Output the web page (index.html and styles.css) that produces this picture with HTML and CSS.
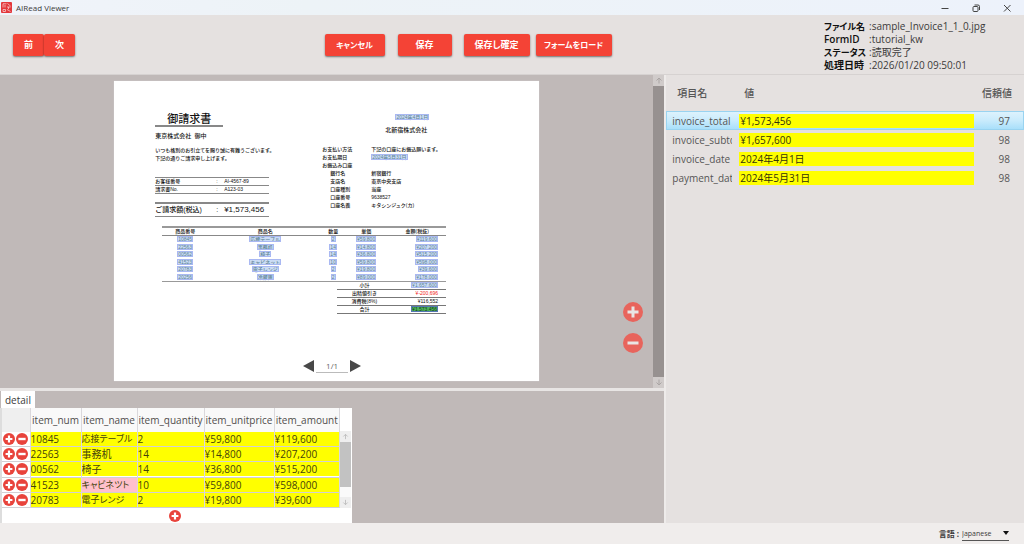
FILE: index.html
```html
<!DOCTYPE html>
<html lang="ja">
<head>
<meta charset="utf-8">
<title>AIRead Viewer</title>
<link rel="stylesheet" href="styles.css">
</head>
<body>
<svg class="defs" aria-hidden="true">
  <symbol id="plus" viewBox="0 0 12 12"><circle cx="6" cy="6" r="6" fill="currentColor"/><path d="M6 2.6v6.8M2.6 6h6.8" stroke="#fff" stroke-width="2.2"/></symbol>
  <symbol id="minus" viewBox="0 0 12 12"><circle cx="6" cy="6" r="6" fill="currentColor"/><path d="M2.4 6h7.2" stroke="#fff" stroke-width="2.4"/></symbol>
  <symbol id="zoom-in" viewBox="0 0 20 20"><circle cx="10" cy="10" r="10" fill="currentColor"/><path d="M10 4.5v11M4.5 10h11" stroke="#e9e5e4" stroke-width="3"/></symbol>
  <symbol id="zoom-out" viewBox="0 0 20 20"><circle cx="10" cy="10" r="10" fill="currentColor"/><path d="M4.5 10h11" stroke="#e9e5e4" stroke-width="3"/></symbol>
  <symbol id="up" viewBox="0 0 8 8"><path d="M4 7V1.5M1.5 4L4 1.5L6.500 4" fill="none" stroke="currentColor"/></symbol>
  <symbol id="down" viewBox="0 0 8 8"><path d="M4 1v5.500M1.500 4L4 6.500L6.500 4" fill="none" stroke="currentColor"/></symbol>
</svg>
<div class="app">
  <header class="titlebar">
    <svg class="logo" viewBox="0 0 11 11"><rect width="11" height="11" rx="1" fill="#e3383c"/><path d="M2 1.800h3.500M2 1.800v3.700M4 3v2.500M2 7.500h2.500v2H2zM6.500 1.500L9.500 4M6 5h3.500M6 7.500L9.500 9.500M7.500 5v2" fill="none" stroke="#fbdcdc" stroke-width=".7"/></svg>
    <h1 class="app-name">AIRead Viewer</h1>
    <div class="window-buttons">
      <button aria-label="最小化"><svg viewBox="0 0 10 10"><path d="M1.500 5.500h7"/></svg></button>
      <button aria-label="元に戻す"><svg viewBox="0 0 10 10"><rect x="2" y="3.500" width="5" height="5" rx="1"/><path d="M3.500 2h3.500q1.500 0 1.500 1.500v3.500"/></svg></button>
      <button aria-label="閉じる"><svg viewBox="0 0 10 10"><path d="M2 2l6.500 6.500M8.500 2L2 8.500"/></svg></button>
    </div>
  </header>

  <div class="toolbar">
    <div class="nav-buttons"><button class="btn">前</button><button class="btn">次</button></div>
    <div class="actions">
      <button class="btn cancel">キャンセル</button>
      <button class="btn save">保存</button>
      <button class="btn commit">保存し確定</button>
      <button class="btn load">フォームをロード</button>
    </div>
    <dl class="info">
      <dt class="kana">ファイル名</dt><dd>:sample_Invoice1_1_0.jpg</dd>
      <dt>FormID</dt><dd>:tutorial_kw</dd>
      <dt class="kana">ステータス</dt><dd>:読取完了</dd>
      <dt>処理日時</dt><dd>:2026/01/20 09:50:01</dd>
    </dl>
  </div>

  <main class="content">
    <div class="left">
      <section class="viewer">
        <div class="canvas">
          <article class="paper">
            <div class="paper-top">
              <div class="bill-to">
                <h2>御請求書</h2>
                <p class="company">東京株式会社&nbsp; 御中</p>
                <p>いつも格別のお引立てを賜り誠に有難うございます。</p>
                <p>下記の通りご請求申し上げます。</p>
                <dl class="refs">
                  <div><dt>お客様番号</dt><dd>:</dd><dd>AI-4567-89</dd></div>
                  <div><dt>請求書No.</dt><dd>:</dd><dd>A123-03</dd></div>
                </dl>
                <dl class="total"><dt>ご請求額(税込)</dt><dd>:</dd><dd class="amount">¥1,573,456</dd></dl>
              </div>
              <div class="pay-to">
                <p class="date"><mark>2024年4月1日</mark></p>
                <p class="issuer">北新宿株式会社</p>
                <dl class="bank">
                  <dt>お支払い方法</dt><dd>下記の口座にお振込願います。</dd>
                  <dt>お支払期日</dt><dd><mark>2024年5月31日</mark></dd>
                  <dt>お振込み口座</dt><dd></dd>
                  <dt class="sub">銀行名</dt><dd>新宿銀行</dd>
                  <dt class="sub">支店名</dt><dd>東京中央支店</dd>
                  <dt class="sub">口座種別</dt><dd>当座</dd>
                  <dt class="sub">口座番号</dt><dd>9638527</dd>
                  <dt class="sub">口座名義</dt><dd>キタシンジュク(カ)</dd>
                </dl>
              </div>
            </div>
            <table class="lines">
              <colgroup><col class="w-num"><col class="w-name"><col class="w-qty"><col class="w-price"><col class="w-sum"></colgroup>
              <thead><tr><th>商品番号</th><th>商品名</th><th>数量</th><th>単価</th><th>金額(税抜)</th></tr></thead>
              <tbody>
                <tr><td><mark>10845</mark></td><td><mark>応接テーブル</mark></td><td><mark>2</mark></td><td><mark>¥59,800</mark></td><td><mark>¥119,600</mark></td></tr>
                <tr><td><mark>22563</mark></td><td><mark>事務机</mark></td><td><mark>14</mark></td><td><mark>¥14,800</mark></td><td><mark>¥207,200</mark></td></tr>
                <tr><td><mark>00562</mark></td><td><mark>椅子</mark></td><td><mark>14</mark></td><td><mark>¥36,800</mark></td><td><mark>¥515,200</mark></td></tr>
                <tr><td><mark>41523</mark></td><td><mark>キャビネット</mark></td><td><mark>10</mark></td><td><mark>¥59,800</mark></td><td><mark>¥598,000</mark></td></tr>
                <tr><td><mark>20783</mark></td><td><mark>電子レンジ</mark></td><td><mark>2</mark></td><td><mark>¥19,800</mark></td><td><mark>¥39,600</mark></td></tr>
                <tr><td><mark>20256</mark></td><td><mark>冷蔵庫</mark></td><td><mark>2</mark></td><td><mark>¥89,000</mark></td><td><mark>¥178,000</mark></td></tr>
              </tbody>
            </table>
            <table class="sums">
              <tbody>
                <tr><th>小計</th><td><mark>¥1,657,600</mark></td></tr>
                <tr><th>出精値引き</th><td class="discount">¥-200,696</td></tr>
                <tr><th>消費税(8%)</th><td>¥116,552</td></tr>
                <tr><th>合計</th><td><mark class="selected">¥1,573,456</mark></td></tr>
              </tbody>
            </table>
          </article>
          <div class="pager">
            <button aria-label="前のページ"><svg viewBox="0 0 11 12"><path d="M11 0v12L0 6z"/></svg></button>
            <input aria-label="ページ" value="1/1">
            <button aria-label="次のページ"><svg viewBox="0 0 11 12"><path d="M0 0v12l11-6z"/></svg></button>
          </div>
          <div class="zoom">
            <button aria-label="拡大"><svg><use href="#zoom-in"/></svg></button>
            <button aria-label="縮小"><svg><use href="#zoom-out"/></svg></button>
          </div>
        </div>
        <div class="scroll page-scroll">
          <svg><use href="#up"/></svg><div class="thumb"></div><svg><use href="#down"/></svg>
        </div>
      </section>

      <section class="detail">
        <button class="tab">detail</button>
        <div class="sheet">
          <div class="sheet-body">
            <table class="items">
              <colgroup><col class="c-act"><col class="c-num"><col class="c-name"><col class="c-qty"><col class="c-price"><col class="c-amount"></colgroup>
              <thead><tr><td></td><th>item_num</th><th>item_name</th><th>item_quantity</th><th>item_unitprice</th><th>item_amount</th></tr></thead>
              <tbody>
                <tr><td class="act"><button aria-label="行を追加"><svg><use href="#plus"/></svg></button><button aria-label="行を削除"><svg><use href="#minus"/></svg></button></td><td><input aria-label="item_num" value="10845"></td><td><input class="kana" aria-label="item_name" value="応接テーブル"></td><td><input aria-label="item_quantity" value="2"></td><td><input aria-label="item_unitprice" value="¥59,800"></td><td><input aria-label="item_amount" value="¥119,600"></td></tr>
                <tr><td class="act"><button aria-label="行を追加"><svg><use href="#plus"/></svg></button><button aria-label="行を削除"><svg><use href="#minus"/></svg></button></td><td><input aria-label="item_num" value="22563"></td><td><input aria-label="item_name" value="事務机"></td><td><input aria-label="item_quantity" value="14"></td><td><input aria-label="item_unitprice" value="¥14,800"></td><td><input aria-label="item_amount" value="¥207,200"></td></tr>
                <tr><td class="act"><button aria-label="行を追加"><svg><use href="#plus"/></svg></button><button aria-label="行を削除"><svg><use href="#minus"/></svg></button></td><td><input aria-label="item_num" value="00562"></td><td><input aria-label="item_name" value="椅子"></td><td><input aria-label="item_quantity" value="14"></td><td><input aria-label="item_unitprice" value="¥36,800"></td><td><input aria-label="item_amount" value="¥515,200"></td></tr>
                <tr><td class="act"><button aria-label="行を追加"><svg><use href="#plus"/></svg></button><button aria-label="行を削除"><svg><use href="#minus"/></svg></button></td><td><input aria-label="item_num" value="41523"></td><td><input class="warn kana" aria-label="item_name" value="キャビネツト"></td><td><input aria-label="item_quantity" value="10"></td><td><input aria-label="item_unitprice" value="¥59,800"></td><td><input aria-label="item_amount" value="¥598,000"></td></tr>
                <tr><td class="act"><button aria-label="行を追加"><svg><use href="#plus"/></svg></button><button aria-label="行を削除"><svg><use href="#minus"/></svg></button></td><td><input aria-label="item_num" value="20783"></td><td><input class="kana" aria-label="item_name" value="電子レンジ"></td><td><input aria-label="item_quantity" value="2"></td><td><input aria-label="item_unitprice" value="¥19,800"></td><td><input aria-label="item_amount" value="¥39,600"></td></tr>
              </tbody>
            </table>
            <div class="scroll table-scroll">
              <svg><use href="#up"/></svg><div class="thumb"></div><svg><use href="#down"/></svg>
            </div>
          </div>
          <button class="add-row" aria-label="行を追加"><svg><use href="#plus"/></svg></button>
        </div>
      </section>
    </div>

    <section class="fields">
      <table>
        <colgroup><col class="f-name"><col><col class="f-score"></colgroup>
        <thead><tr><th>項目名</th><th>値</th><th>信頼値</th></tr></thead>
        <tbody>
          <tr class="current"><th><span>invoice_total</span></th><td><input aria-label="invoice_total" value="¥1,573,456"></td><td>97</td></tr>
          <tr><th><span>invoice_subtotal</span></th><td><input aria-label="invoice_subtotal" value="¥1,657,600"></td><td>98</td></tr>
          <tr><th><span>invoice_date</span></th><td><input aria-label="invoice_date" value="2024年4月1日"></td><td>98</td></tr>
          <tr><th><span>payment_date</span></th><td><input aria-label="payment_date" value="2024年5月31日"></td><td>98</td></tr>
        </tbody>
      </table>
    </section>
  </main>

  <footer class="statusbar">
    <label for="lang">言語 :</label>
    <div class="lang">
      <select id="lang"><option>Japanese</option></select>
      <svg viewBox="0 0 6 4"><path d="M0 0h6L3 4z"/></svg>
    </div>
  </footer>
</div>
</body>
</html>
```
FILE: styles.css
```css
* { box-sizing: border-box; }
body, h1, h2, p, dl, dd { margin: 0; }
body {
  font: 10px/14px "Open Sans", "Noto Sans CJK JP", sans-serif;
  font-feature-settings: "palt";
  color: #3c3a3a;
  background: #e5e1e0;
}
button, input, select {
  font: inherit;
  font-feature-settings: inherit;
  color: inherit;
  margin: 0;
  padding: 0;
  border: 0;
  border-radius: 0;
  background: none;
}
button { cursor: pointer; display: flex; align-items: center; justify-content: center; }
svg { display: block; }
table { border-collapse: collapse; }
th, td { padding: 0; font-weight: 400; }
.defs { position: absolute; width: 0; height: 0; }
.kana { font-size: 9px; }

.app { display: flex; flex-direction: column; min-height: 100vh; }

.titlebar {
  display: flex;
  align-items: center;
  height: 15px;
  padding-left: 1px;
  background: linear-gradient(90deg, #f0f3fa, #edf3f7 30%, #edf2fb);
}
.logo { width: 11px; height: 11px; }
.app-name { margin-left: 4px; font-size: 8px; line-height: 15px; font-weight: 400; }
.window-buttons { display: flex; margin-left: auto; padding-right: 2px; }
.window-buttons button { width: 31px; height: 15px; }
.window-buttons svg { width: 10px; height: 10px; fill: none; stroke: #444; }

.toolbar { display: flex; justify-content: space-between; height: 60px; padding: 4px 0 0 13px; border-bottom: 1px solid #d6d2d1; }
.nav-buttons, .actions { display: flex; padding-top: 15px; }
.btn {
  height: 22px;
  border-radius: 2px;
  background: #f44336;
  box-shadow: 0 1px 2px rgba(0, 0, 0, .5);
  color: #fff;
  font-size: 9px;
  font-weight: 700;
}
.nav-buttons .btn { width: 31px; }
.actions { flex: 1; justify-content: center; padding-left: 37px; }
.cancel { width: 60px; margin-right: 13px; }
.save { width: 54px; margin-right: 12px; }
.commit { width: 66px; margin-right: 6px; }
.load { width: 76px; }
.cancel, .load { font-size: 8px; }
.info { display: grid; grid-template-columns: 45px 1fr; grid-auto-rows: 13px; width: 200px; align-content: start; padding-top: 1px; line-height: 13px; }
.info dt { color: #111; font-weight: 600; white-space: nowrap; }
.info dd { white-space: nowrap; }

.content { flex: 1; display: flex; }
.left { flex: 65 1 0; display: flex; flex-direction: column; border-right: 2px solid #eeebea; min-width: 0; }
.viewer { flex: 1; display: flex; background: #c0b9b8; border-bottom: 3px solid #e8e5e4; }
.canvas { position: relative; flex: 1; display: flex; justify-content: center; padding: 6px 0 7px; }
.paper {
  width: 65%;
  min-width: 425px;
  padding: 32px 93px 0 41px;
  background: #fff;
  box-shadow: 0 0 1px #ddd;
  color: #111;
  font: 500 5px/8px "Liberation Sans", "Noto Sans CJK JP", sans-serif;
  font-feature-settings: normal;
  white-space: nowrap;
}
.paper th { font-weight: 500; }
.paper td { font-weight: 500; }
.paper mark { display: inline-block; line-height: 6px; background: #cbdcf4; color: #5b8396; outline: 1px solid #a9b8f2; outline-offset: -1px; padding: 0 1px; }
.paper mark.selected { background: #4eb45a; color: #123d18; outline-color: #5577b4; }
.paper-top { display: flex; justify-content: space-between; height: 113px; }
.bill-to { width: 114px; }
.bill-to h2 { width: 68px; font-size: 11px; line-height: 12px; font-weight: 500; text-align: center; border-bottom: 2px solid #888; }
.company { margin: 5px 0 6px; font-size: 6px; }
.refs { margin: 15px 0 8px; border-top: 1px solid #888; }
.refs div, .total { display: grid; grid-template-columns: 61px 8px 1fr; border-bottom: 1px solid #888; }
.refs div { line-height: 7px; }
.total { font-size: 7px; line-height: 12px; border-top: 2px solid #888; }
.total .amount { font-size: 8px; }
.pay-to { width: 124px; }
.date { padding: 0 17px 0 0; text-align: right; font-size: 5px; }
.issuer { margin: 5px 19px 11px; text-align: right; font-size: 6px; }
.bank { display: grid; grid-template-columns: 49px 1fr; grid-auto-rows: 8px; }
.bank .sub { padding-left: 8px; }
.lines { table-layout: fixed; width: 284px; height: 56px; margin-left: 7px; text-align: center; line-height: 7px; border-top: 2px solid #999; border-bottom: 1px solid #999; }
.lines thead { border-bottom: 1px solid #888; }
.w-num { width: 46px; } .w-name { width: 114px; } .w-qty { width: 22px; } .w-price { width: 44px; }
.lines td:last-child, .sums td { text-align: right; padding-right: 8px; }
.lines mark { vertical-align: top; }
.sums { table-layout: fixed; width: 109px; margin-left: 182px; text-align: center; line-height: 7px; }
.sums tr { border-bottom: 1px solid #777; }
.sums mark { vertical-align: top; }
.discount { color: #f02020; }

.pager { position: absolute; left: 0; right: 0; bottom: 15px; display: flex; justify-content: center; align-items: center; gap: 2px; padding-left: 11px; }
.pager svg { width: 11px; height: 12px; fill: #484848; }
.pager input { width: 32px; height: 15px; font-size: 8px; text-align: center; color: #666; border-bottom: 1px solid #bbb; }
.zoom { position: absolute; right: 10px; bottom: 35px; display: grid; gap: 11px; color: #e8645c; }
.zoom svg { width: 20px; height: 20px; }

.scroll { display: flex; flex-direction: column; align-items: center; width: 11px; background: #d0cbca; color: #aaa5a4; }
.scroll svg { width: 8px; height: 11px; }
.thumb { width: 11px; background: #979190; }
.page-scroll .thumb { flex: 1; }

.detail { height: 132px; background: #c0b9b8; }
.tab { height: 17px; margin-left: 1px; padding: 0 4px; background: #fff; }
.sheet { width: 352px; height: 115px; background: #fff; border-left: 2px solid #ddd; }
.sheet-body { display: flex; }
.items { table-layout: fixed; width: 338px; height: 100px; line-height: 14px; color: #504d4c; }
.items thead { height: 24px; background: #f9f9f9; }
.items thead td { background: #efefef; }
.items tbody tr { border-bottom: 1px solid #d2d0d4; }
.items th, .items td { border-right: 1px solid #dad8dc; }
.c-act { width: 28px; } .c-num { width: 51px; } .c-name { width: 56px; } .c-qty { width: 67px; } .c-price { width: 70px; }
.items td { background: #fff; }
.items input { display: block; width: 100%; height: 14px; background: #ff0; color: #44420c; }
.items input.warn { background: #ffc0cb; }
.act button { display: inline-flex; margin-left: 1px; vertical-align: top; height: 14px; color: #e8433b; }
.act svg, .add-row svg { width: 12px; height: 12px; }
.table-scroll { margin-top: 23px; background: #fafafa; color: #bbb; }
.table-scroll svg { width: 11px; padding: 2px; background: #eee; flex: none; }
.table-scroll .thumb { height: 45px; margin-bottom: auto; background: #c2c2c2; }
.add-row { width: 100%; height: 15px; padding-right: 4px; color: #e8433b; }

.fields { flex: 35 1 0; min-width: 0; }
.fields table { table-layout: fixed; width: 100%; color: #555; }
.f-name { width: 73px; } .f-score { width: 50px; }
.fields thead th { height: 36px; padding-left: 11px; text-align: left; font-weight: 500; }
.fields thead th:nth-child(2) { padding-left: 5px; }
.fields thead th:last-child { padding: 0 12px 0 0; text-align: right; }
.fields tbody tr { height: 19px; }
.fields tbody th { padding-left: 6px; text-align: left; }
.fields tbody th span { display: block; width: 60px; overflow: hidden; }
.fields tbody td:last-child { padding-right: 14px; text-align: right; }
.fields input { display: block; width: 100%; height: 14px; padding-left: 1px; background: #ff0; color: #33320a; }
.fields .current { background: linear-gradient(#dff3fd, #c9ebfc 50%, #a5defa); box-shadow: inset 0 0 0 1px #99d3f0; }

.statusbar { display: flex; align-items: center; justify-content: flex-end; height: 21px; padding-right: 15px; background: #f0edec; font-size: 8px; }
.statusbar label { font-weight: 700; margin-right: 3px; }
.lang { display: flex; align-items: center; width: 47px; border-bottom: 1px solid #555; }
.lang select { flex: 1; min-width: 0; appearance: none; font-size: 7px; line-height: 13px; }
.lang svg { width: 6px; height: 4px; fill: #111; }
```
